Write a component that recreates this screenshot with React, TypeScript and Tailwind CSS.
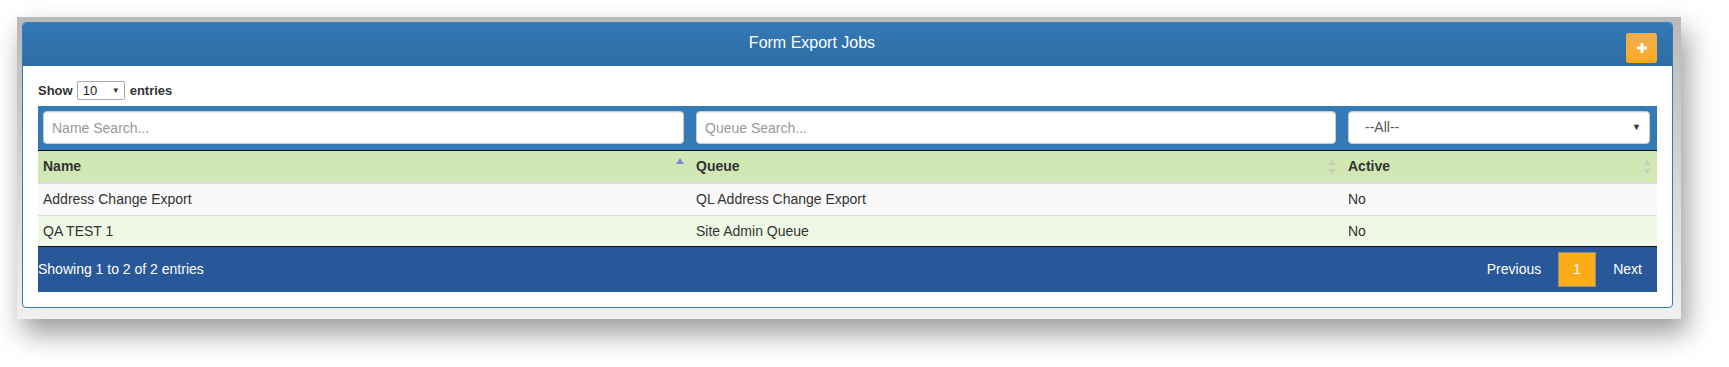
import React from "react";

interface Job {
    name: string;
    queue: string;
    active: string;
}

const jobs: Job[] = [
    { name: "Address Change Export", queue: "QL Address Change Export", active: "No" },
    { name: "QA TEST 1", queue: "Site Admin Queue", active: "No" },
];

const SortBoth: React.FC = () => (
    <svg width="8" height="14" viewBox="0 0 8 14" className="shrink-0">
        <path d="M4 0 L8 5 L0 5 Z" fill="#c4d0b9" />
        <path d="M4 14 L8 9 L0 9 Z" fill="#c4d0b9" />
    </svg>
);

const SortUp: React.FC = () => (
    <svg width="8" height="14" viewBox="0 0 8 14" className="shrink-0 -mt-[6px]">
        <path d="M4 1 L8 7 L0 7 Z" fill="#7f86d9" />
    </svg>
);

const cols = "grid grid-cols-[652px_652px_314px]";

export default function App() {
    return (
        <div className="w-[1729px] h-[367px] bg-white overflow-hidden font-['Liberation_Sans',Arial,sans-serif] text-[14px] text-[#333]">
            {/* screenshot frame with drop shadow */}
            <div className="ml-[17px] mt-[17px] w-[1664px] h-[302px] pl-[5px] pt-[5px] bg-linear-to-b from-[#b9b9b9] to-[#f0f0f0] shadow-[6px_14px_26px_rgba(0,0,0,0.4)]">
                <div className="w-[1651px] h-[286px] bg-white border border-[#337ab7] rounded-[4px] overflow-hidden">
                    {/* Header */}
                    <div className="h-[43px] flex items-start pt-[10px] pl-[15px] pr-[15px] bg-linear-to-b from-[#3479b7] to-[#2e6ca3]">
                        <div className="flex-1 mr-[40px] text-center text-white text-[16px] leading-[20px]">
                            Form Export Jobs
                        </div>
                        <button className="w-[31px] h-[30px] rounded-[3px] flex items-center justify-center bg-linear-to-b from-[#f0ad4e] to-[#fcac15]">
                            <svg width="10" height="10" viewBox="0 0 10 10">
                                <rect x="3.5" y="0" width="3" height="10" fill="#fff" />
                                <rect x="0" y="3.5" width="10" height="3" fill="#fff" />
                            </svg>
                        </button>
                    </div>

                    <div className="px-[15px] pt-[15px]">
                        {/* Show entries */}
                        <div className="flex items-center h-[19px] text-[13px] font-bold text-[#333]">
                            <span>Show</span>
                            <div className="ml-[4px] w-[48px] h-[19px] border border-[#a9a9a9] rounded-[2px] flex items-center justify-between pl-[5px] pr-[4px] font-normal text-[13px] text-[#222]">
                                <span>10</span>
                                <span className="text-[8px] text-[#333]">▼</span>
                            </div>
                            <span className="ml-[5px]">entries</span>
                        </div>

                        {/* Filter bar */}
                        <div className={`${cols} mt-[6px] bg-[#337ab7] pt-[5px] pb-[6px] border-b border-[#111]`}>
                            <div className="pl-[5px] pr-[6px]">
                                <input
                                    placeholder="Name Search..."
                                    className="w-full h-[33px] bg-white border border-[#ccc] rounded-[4px] pl-[8px] text-[14px] text-[#555] placeholder:text-[#999] shadow-[inset_0_1px_1px_rgba(0,0,0,0.075)] outline-none"
                                />
                            </div>
                            <div className="px-[6px]">
                                <input
                                    placeholder="Queue Search..."
                                    className="w-full h-[33px] bg-white border border-[#ccc] rounded-[4px] pl-[8px] text-[14px] text-[#555] placeholder:text-[#999] shadow-[inset_0_1px_1px_rgba(0,0,0,0.075)] outline-none"
                                />
                            </div>
                            <div className="px-[6px]">
                                <div className="h-[33px] bg-white border border-[#ccc] rounded-[4px] flex items-center justify-between pl-[16px] pr-[8px] text-[#555] shadow-[inset_0_1px_1px_rgba(0,0,0,0.075)]">
                                    <span>--All--</span>
                                    <span className="text-[9px] text-[#333]">▼</span>
                                </div>
                            </div>
                        </div>

                        {/* Column headers */}
                        <div className={`${cols} h-[33px] bg-[#d1e8b5] border-b-2 border-[#ddd] font-bold text-[#333]`}>
                            <div className="flex items-center justify-between pl-[5px] pr-[6px]">
                                <span>Name</span>
                                <SortUp />
                            </div>
                            <div className="flex items-center justify-between pl-[6px] pr-[6px]">
                                <span>Queue</span>
                                <SortBoth />
                            </div>
                            <div className="flex items-center justify-between pl-[6px] pr-[5px]">
                                <span>Active</span>
                                <SortBoth />
                            </div>
                        </div>

                        {/* Rows */}
                        {jobs.map((job, i) => (
                            <div
                                key={job.name}
                                className={`${cols} items-center ${
                                    i === 0
                                        ? "h-[32px] bg-[#f9f9f9] border-b border-[#ddd]"
                                        : "h-[31px] bg-[#eff8e5] border-b border-[#111]"
                                }`}
                            >
                                <div className="pl-[5px]">{job.name}</div>
                                <div className="pl-[6px]">{job.queue}</div>
                                <div className="pl-[6px]">{job.active}</div>
                            </div>
                        ))}

                        {/* Footer */}
                        <div className="h-[45px] bg-[#28579a] flex items-center justify-between text-white pr-[15px]">
                            <span>Showing 1 to 2 of 2 entries</span>
                            <div className="flex items-center">
                                <span>Previous</span>
                                <span className="ml-[17px] w-[38px] h-[35px] flex items-center justify-center bg-[#fbad18] border border-[#8a8f99]">
                                    1
                                </span>
                                <span className="ml-[17px]">Next</span>
                            </div>
                        </div>
                    </div>
                </div>
            </div>
        </div>
    );
}
